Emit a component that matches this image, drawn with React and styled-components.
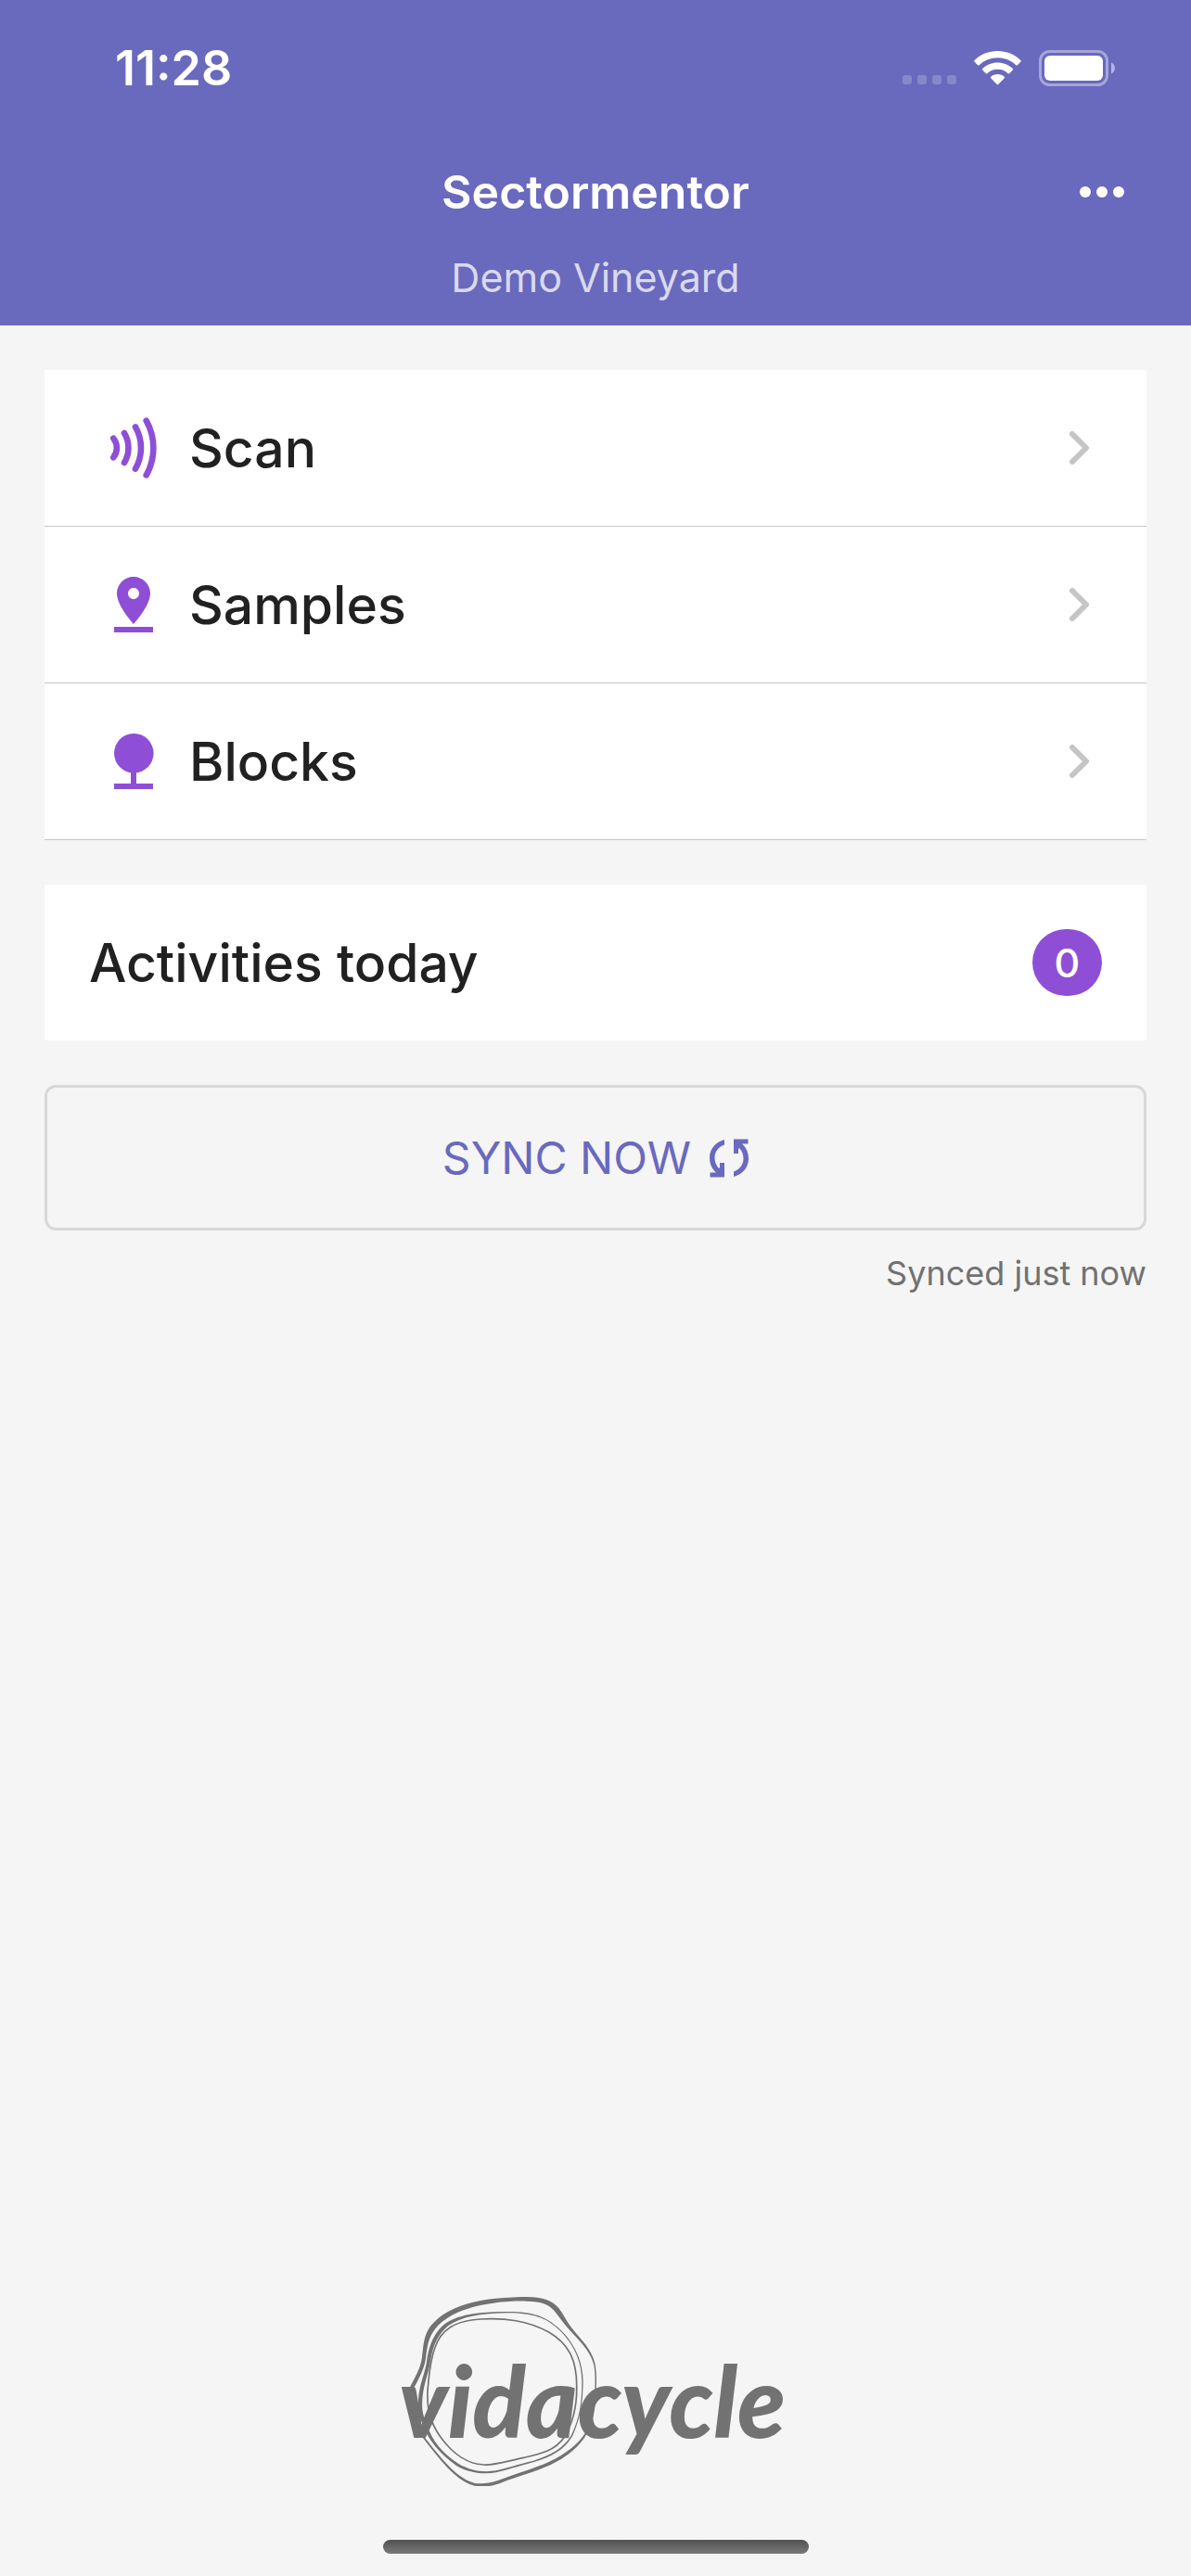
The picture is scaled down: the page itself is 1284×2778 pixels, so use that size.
import React from 'react';
import styled, { createGlobalStyle } from 'styled-components';

const GlobalStyle = createGlobalStyle`
  * {
    box-sizing: border-box;
  }
  body {
    margin: 0;
    background: #f5f5f5;
    font-family: Inter, sans-serif;
  }
  button {
    font-family: inherit;
    cursor: pointer;
  }
`;

const Page = styled.div`
  display: flex;
  flex-direction: column;
  min-height: 100vh;
`;
const Header = styled.header`
  background: #6969be;
  color: #fff;
  padding-bottom: 21px;
`;
const StatusBar = styled.div`
  display: flex;
  align-items: center;
  justify-content: space-between;
  height: 146px;
  padding: 0 80px 0 124px;
`;
const Time = styled.span`
  font-size: 52px;
  font-weight: 600;
`;
const StatusIcons = styled.div`
  display: flex;
  align-items: center;
  gap: 19px;
`;
const TitleRow = styled.div`
  display: grid;
  grid-template-columns: 1fr auto 1fr;
  align-items: center;
  height: 122px;
  padding: 0 60px;
`;
const Title = styled.h1`
  grid-column: 2;
  margin: 0;
  font-size: 50px;
  font-weight: 600;
`;
const MenuButton = styled.button`
  justify-self: end;
  display: flex;
  padding: 12px;
  border: none;
  background: none;
  color: inherit;
`;
const Subtitle = styled.p`
  margin: 0;
  font-size: 43px;
  line-height: 62px;
  text-align: center;
  color: #d9d9ef;
`;
const Main = styled.main`
  display: flex;
  flex-direction: column;
  gap: 48px;
  padding: 48px;
`;
const Menu = styled.nav`
  background: #fff;
`;
const MenuItem = styled.a`
  display: flex;
  align-items: center;
  gap: 24px;
  height: 169px;
  padding: 0 60px;
  border-bottom: 1px solid #c5c5c7;
  color: #212121;
  font-size: 57px;
  font-weight: 500;
  text-decoration: none;
  > svg:first-child {
    color: #8e4fd6;
  }
  > svg:last-child {
    margin-left: auto;
    color: #c5c5c7;
  }
`;
const Activities = styled.section`
  display: flex;
  align-items: center;
  justify-content: space-between;
  height: 168px;
  padding: 0 48px;
  background: #fff;
  color: #212121;
  font-size: 57px;
  font-weight: 500;
`;
const Badge = styled.span`
  min-width: 75px;
  border-radius: 36px;
  background: #8e4fd6;
  color: #fff;
  font-size: 43px;
  line-height: 72px;
  text-align: center;
`;
const Sync = styled.div`
  display: flex;
  flex-direction: column;
  gap: 24px;
`;
const SyncButton = styled.button`
  display: flex;
  align-items: center;
  justify-content: center;
  gap: 20px;
  height: 157px;
  border: 3px solid #d8d8d8;
  border-radius: 12px;
  background: none;
  color: #6969be;
  font-size: 48px;
`;
const SyncStatus = styled.p`
  margin: 0;
  font-size: 36px;
  line-height: 44px;
  text-align: right;
  color: #717171;
`;
const Footer = styled.footer`
  display: flex;
  flex-direction: column;
  align-items: center;
  gap: 58px;
  margin-top: auto;
  padding-bottom: 24px;
`;
const HomeIndicator = styled.div`
  width: 459px;
  height: 15px;
  border-radius: 8px;
  background: linear-gradient(#505050, #7a7a7a);
`;

const SignalIcon = () => (
  <svg width="58" height="38" fill="#fff" opacity="0.2">
    <rect x="0" y="27" width="10" height="10" rx="3" />
    <rect x="16" y="27" width="10" height="10" rx="3" />
    <rect x="32" y="27" width="10" height="10" rx="3" />
    <rect x="48" y="27" width="10" height="10" rx="3" />
  </svg>
);

const WifiIcon = () => (
  <svg width="51" height="37" viewBox="0 0 51 37" fill="#fff">
    <path d="M25.5 0C35 0 44 3.5 50.5 10.2a1 1 0 0 1 0 1.4L46.8 15.3a1 1 0 0 1-1.4 0A28.5 28.5 0 0 0 5.6 15.3a1 1 0 0 1-1.4 0L.5 11.6a1 1 0 0 1 0-1.4C7 3.5 16 0 25.5 0Z" />
    <path d="M25.5 12.5c6.1 0 11.900 2.300 16.300 6.500a1 1 0 0 1 0 1.500l-3.700 3.700a1 1 0 0 1-1.400 0 16.500 16.500 0 0 0-22.400 0 1 1 0 0 1-1.400 0L9.200 20.500a1 1 0 0 1 0-1.500c4.400-4.200 10.200-6.500 16.300-6.500Z" />
    <path d="M25.5 25c2.7 0 5.3 1 7.300 2.700a1 1 0 0 1 0 1.500L26.200 36a1 1 0 0 1-1.400 0L18.200 29.200a1 1 0 0 1 0-1.500c2-1.700 4.600-2.700 7.300-2.700Z" />
  </svg>
);

const BatteryIcon = () => (
  <svg width="84" height="39" viewBox="0 0 84 39">
    <rect x="1.5" y="1.5" width="72" height="36" rx="10" fill="none" stroke="#fff" strokeOpacity="0.4" strokeWidth="3" />
    <rect x="6" y="6" width="63" height="27" rx="6" fill="#fff" />
    <path d="M78 13.500c2.500 1 4 3.500 4 6s-1.500 5-4 6z" fill="#fff" fillOpacity="0.5" />
  </svg>
);

const DotsIcon = () => (
  <svg width="48" height="12" fill="currentColor">
    <circle cx="6" cy="6" r="6" />
    <circle cx="24" cy="6" r="6" />
    <circle cx="42" cy="6" r="6" />
  </svg>
);

const ScanIcon = () => (
  <svg width="72" height="72" fill="none" stroke="currentColor" strokeWidth="6.6" strokeLinecap="round">
    <path d="M14.300 25.700a16.500 16.500 0 0 1 0 20.600" />
    <path d="M26 20a31 31 0 0 1 0 32" />
    <path d="M38 13.400a45.600 45.600 0 0 1 0 45.200" />
    <path d="M49.700 6.600a60 60 0 0 1 0 58.800" />
  </svg>
);

const PinIcon = () => (
  <svg width="72" height="72" viewBox="0 0 24 24" fill="currentColor">
    <path d="M18 8c0-3.310-2.690-6-6-6S6 4.690 6 8c0 4.500 6 11 6 11s6-6.500 6-11zm-8 0c0-1.100.9-2 2-2s2 .9 2 2-.89 2-2 2c-1.100 0-2-.9-2-2zM5 20v2h14v-2H5z" />
  </svg>
);

const TreeIcon = () => (
  <svg width="72" height="72" viewBox="0 0 24 24" fill="currentColor">
    <circle cx="12.1" cy="9.1" r="7.1" />
    <path d="M11 15h2v5h6v2H5v-2h6z" />
  </svg>
);

const ChevronIcon = () => (
  <svg width="23" height="38" fill="none" stroke="currentColor" strokeWidth="6" strokeLinecap="round" strokeLinejoin="round">
    <path d="M3 4l15 15L3 34" />
  </svg>
);

const SyncIcon = () => (
  <svg width="42" height="42" viewBox="0 0 42 42" fill="currentColor">
    <path d="M16 1v5.500C9.500 9 5.500 14 5.500 20.500c0 4.500 1.500 8.500 4.500 11.500l1-1v-5h5v15.500H.5v-5H7C3 33 0 27.500 0 20.500 0 11 6.500 3.500 16 1Z" />
    <path d="M26 41v-5.500c6.500-2.500 10.500-7.500 10.500-14 0-4.500-1.500-8.500-4.500-11.500l-1 1v5h-5V.5h15.500v5H35c4 3.500 7 9 7 16 0 9.500-6.500 17-16 19.500Z" />
  </svg>
);

// tree rings with the brand name over them
const Logo = () => (
  <svg width="424" height="206" viewBox="0 0 424 206" fill="#727272">
    <g transform="translate(-5 -10) scale(0.3333)" fillRule="evenodd">
      <path
        d="M50 330C70 290 86 265 90 230C94 195 96 158 118 130C158 80 230 52 320 42C370 37 400 36 430 36C480 36 512 48 532 72C547 92 557 114 573 135C602 172 641 205 651 260C656 300 654 320 652 350C652 400 640 450 622 480C600 520 560 553 505 580C450 604 400 617 350 636C310 652 280 652 255 646C195 626 150 565 85 482C50 430 40 370 50 330Z
        M60 338C50 375 58 430 92 482C155 562 200 620 258 638C280 642 305 640 335 630C400 606 450 592 500 570C555 545 595 512 617 478C636 448 648 400 648 350C650 320 651 300 647 262C636 210 598 178 566 142C550 124 536 104 520 84C502 60 475 50 430 50C400 49 370 50 320 56C240 67 170 92 132 140C110 168 106 200 102 235C98 268 80 300 60 338Z"
      />
      <path
        d="M78 370C83 310 98 290 105 245C112 190 130 150 165 122C215 88 290 84 370 84C450 84 490 100 530 135C580 180 610 240 611 310C610 380 602 430 577 485C550 532 510 552 450 571C400 585 360 597 330 604C290 611 240 606 200 581C150 546 110 500 93 450C80 420 76 400 78 370Z
        M91 370C88 400 93 420 106 450C122 500 155 540 205 574C245 600 290 604 330 598C360 590 400 579 450 566C508 547 547 527 573 483C599 430 607 380 607 310C606 240 577 182 528 138C490 104 450 89 370 88C290 89 222 96 174 130C142 157 124 195 117 245C110 290 96 310 91 370Z"
      />
      <path
        d="M108 340C112 290 118 240 130 205C150 140 200 112 280 108C360 104 430 112 500 150C560 185 590 235 590 320C592 380 580 440 550 490C520 535 470 545 420 556C370 566 320 582 290 579C240 578 190 545 150 490C115 440 106 400 108 340Z"
        fill="none"
        stroke="#727272"
        strokeWidth="5"
      />
    </g>
    <text x="0" y="154" fontFamily="Lato, sans-serif" fontSize="106" fontWeight="900" fontStyle="italic">
      vidacycle
    </text>
  </svg>
);

const items = [
  { label: 'Scan', Icon: ScanIcon },
  { label: 'Samples', Icon: PinIcon },
  { label: 'Blocks', Icon: TreeIcon },
];

const App = () => {
  return (
    <Page>
      <GlobalStyle />
      <Header>
        <StatusBar>
          <Time>11:28</Time>
          <StatusIcons>
            <SignalIcon />
            <WifiIcon />
            <BatteryIcon />
          </StatusIcons>
        </StatusBar>
        <TitleRow>
          <Title>Sectormentor</Title>
          <MenuButton aria-label="Menu">
            <DotsIcon />
          </MenuButton>
        </TitleRow>
        <Subtitle>Demo Vineyard</Subtitle>
      </Header>
      <Main>
        <Menu>
          {items.map(({ label, Icon }) => (
            <MenuItem key={label} href="#">
              <Icon />
              {label}
              <ChevronIcon />
            </MenuItem>
          ))}
        </Menu>
        <Activities>
          Activities today
          <Badge>0</Badge>
        </Activities>
        <Sync>
          <SyncButton>
            SYNC NOW
            <SyncIcon />
          </SyncButton>
          <SyncStatus>Synced just now</SyncStatus>
        </Sync>
      </Main>
      <Footer>
        <Logo />
        <HomeIndicator />
      </Footer>
    </Page>
  );
};

export default App;
